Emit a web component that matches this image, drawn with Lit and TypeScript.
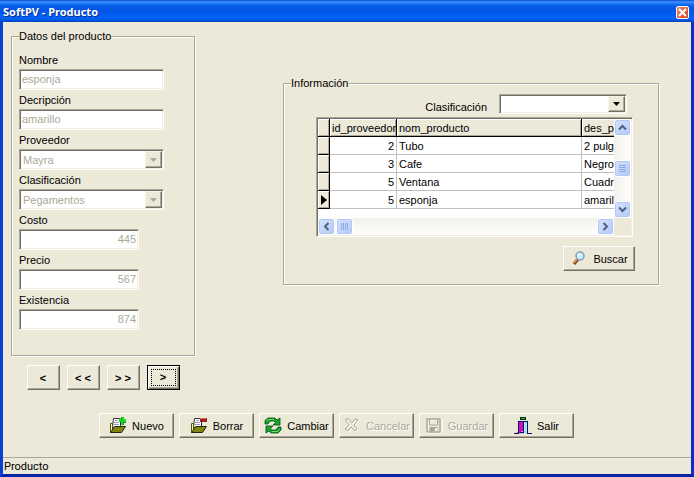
import { LitElement, html, css, svg } from "lit";
import { customElement, property } from "lit/decorators.js";

const folder = svg`
  <path d="M4.500 1.500h6l1 1v8h-8z" fill="#fff" stroke="#33333d"/>
  <path d="M6 3.500h3M5 5.500h5M5 7.500h5" stroke="#9a9ac0"/>
  <path d="M1.500 6.500h2v7l-2 2z" fill="#ffff9c" stroke="#55551a"/>
  <path d="M5.500 9.500h11l-4 6h-11z" fill="#848410" stroke="#26260a"/>`;

const icons: Record<string, unknown> = {
  nuevo: svg`
    ${folder}
    <path d="M12 0h3v2h2v3h-2v3h-3v-3h-2v-3h2z" fill="#19d51f"/>
    <path d="M12.500 0v2h-2M15 5.500h2M14.500 8v-3" stroke="#0b9a14" fill="none"/>`,
  borrar: svg`
    ${folder}
    <path d="M11.500 5v4" stroke="#222"/>
    <rect x="10" y="1" width="7" height="4" fill="#a01c1c"/>
    <rect x="10" y="1" width="6" height="1" fill="#d86a6a"/>`,
  cambiar: svg`
    <path d="M1 7V3.500L4 1h7l2 2 3-2v7H9l2.500-2.500L10 4H6L4 7z" fill="#16a52a" stroke="#064a12" stroke-width=".8"/>
    <path d="M17 10v3l-3 3H7l-2-2-3 2V9h7l-2.500 2.500L8 13h4l2-3z" fill="#16a52a" stroke="#064a12" stroke-width=".8"/>
    <path d="M2.500 4l2-1.500H10M8 14.500h5.500l2-2" stroke="#6be06c" fill="none"/>`,
  cancelar: svg`
    <path d="M4 3l3 0 3 4 3-4 3 1-4 5 3 4-2 2-4-4-3 4-3-2 4-4-3-4z" fill="none" stroke="#fff"/>
    <path d="M3 2l3 0 3 4 3-4 3 1-4 5 3 4-2 2-4-4-3 4-3-2 4-4-3-4z" fill="none" stroke="#aca899"/>`,
  guardar: svg`
    <path d="M3 3h14v13h-14z" fill="none" stroke="#fff"/>
    <path d="M2 2h13v13h-12l-1-1z" fill="none" stroke="#aca899" stroke-width="1.500"/>
    <path d="M4.500 2v6h8v-6M13 4v2" fill="none" stroke="#aca899"/>
    <path d="M4.500 10h8v4h-8z" fill="#aca899"/>
    <path d="M10 11h2v3h-2z" fill="#f6f4ea"/>`,
  salir: svg`
    <path d="M1 16.500h9l-2-2h-4z" fill="#8c8c8c"/>
    <rect x="4.500" y="4.500" width="9" height="11" fill="#fff" stroke="#10106a"/>
    <path d="M5 5h4v9l-4 2z" fill="#d010b8"/>
    <path d="M10 5h3v11h-3z" fill="#8ee6f4"/>
    <path d="M10.500 6v1M12.500 7v1M10.500 9v1M12.500 10v1M10.500 12v1M12.500 13v1" stroke="#fff"/>
    <path d="M9.500 4v11M0 16.500h5M13 16.500h5" stroke="#10106a"/>
    <rect x="6.500" y=".5" width="5" height="2" fill="#2fb85a" stroke="#0b2a12"/>`,
  buscar: svg`
    <path d="M4 14l4-5" stroke="#7a3d16" stroke-width="3"/>
    <path d="M4 13l4-5" stroke="#e8973a" stroke-width="1.500"/>
    <circle cx="10" cy="6" r="4" fill="#c9f0fb" stroke="#7d9dc0" stroke-width="1.500"/>
    <path d="M8 5.500l2-2" stroke="#fff" stroke-width="1.500"/>`,
};

const icon = (name: string) => html`<svg
  class="icon" viewBox="0 0 18 18" width="18" height="18" aria-hidden="true"
>${icons[name]}</svg>`;

const base = css`
  * { box-sizing: border-box; }
  input, select, button { font: inherit; color: inherit; margin: 0; border-radius: 0; }
  .sunken {
    padding: 1px;
    border: 1px solid;
    border-color: #aca899 #fff #fff #aca899;
    box-shadow: inset 1px 1px 0 #716f64, inset -1px -1px 0 #f1efe2;
    background: #fff;
  }
`;

@customElement("pv-field")
class PvField extends LitElement {
  @property() label = "";
  @property() value = "";
  @property() kind = "text";

  static styles = [base, css`
    :host { display: block; }
    label { display: block; height: 19px; line-height: 20px; }
    .box { display: block; width: 145px; height: 21px; padding: 0 2px 1px; color: #aca899; }
    .number { width: 120px; text-align: right; }
  `];

  render() {
    return html`
      <label for="control">${this.label}</label>
      ${this.kind === "select"
        ? html`<pv-combo id="control" .label=${this.label} .value=${this.value} disabled></pv-combo>`
        : html`<input id="control" class="box sunken ${this.kind}" .value=${this.value} disabled>`}
    `;
  }
}

@customElement("pv-combo")
class PvCombo extends LitElement {
  @property() label = "";
  @property() value = "";
  @property({ type: Boolean }) disabled = false;

  static styles = [base, css`
    :host { display: block; width: 145px; }
    .combo { display: grid; grid-template-columns: 1fr 17px; height: 20px; }
    :host([disabled]) .combo { color: #aca899; height: 21px; }
    select {
      grid-area: 1 / 1 / 2 / 3;
      appearance: none;
      width: 100%;
      border: 0;
      padding: 0 20px 0 2px;
      background: transparent;
      opacity: 1;
      outline: 0;
    }
    .arrow {
      grid-area: 1 / 2;
      display: grid;
      place-items: center;
      pointer-events: none;
      background: #ece9d8;
      border: 1px solid;
      border-color: #f6f4ea #716f64 #716f64 #f6f4ea;
      box-shadow: inset -1px -1px 0 #aca899;
    }
  `];

  render() {
    return html`
      <div class="combo sunken">
        <select aria-label=${this.label} ?disabled=${this.disabled}>
          <option>${this.value}</option>
        </select>
        <span class="arrow">
          <svg width="7" height="4" viewBox="0 0 7 4"><path d="M0 0h7L3.500 4z" fill="currentColor"/></svg>
        </span>
      </div>`;
  }
}

@customElement("app-root")
class AppRoot extends LitElement {
  fields = [
    ["Nombre", "esponja", "text"],
    ["Decripción", "amarillo", "text"],
    ["Proveedor", "Mayra", "select"],
    ["Clasificación", "Pegamentos", "select"],
    ["Costo", "445", "number"],
    ["Precio", "567", "number"],
    ["Existencia", "874", "number"],
  ];

  rows = [
    ["2", "Tubo", "2 pulgadas"],
    ["3", "Cafe", "Negro"],
    ["5", "Ventana", "Cuadrada"],
    ["5", "esponja", "amarillo"],
  ];

  actions = [
    ["nuevo", "Nuevo"],
    ["borrar", "Borrar"],
    ["cambiar", "Cambiar"],
    ["cancelar", "Cancelar"],
    ["guardar", "Guardar"],
    ["salir", "Salir"],
  ];

  static styles = [base, css`
    :host {
      display: flex;
      flex-direction: column;
      min-height: 100vh;
      box-sizing: border-box;
      background: #ece9d8;
      color: #000;
      font: 11px/14px "Liberation Sans", Arial, sans-serif;
    }
    .title {
      display: flex;
      align-items: center;
      justify-content: space-between;
      height: 22px;
      padding: 2px 5px 0 3px;
      background: linear-gradient(#0b4fd0 0, #3c93ff 2px, #0a62ee 5px, #0055e2 10px, #0262fb 18px, #0458e8 20px, #0340b8 22px);
      color: #fff;
    }
    h1 { margin: 0; font: bold 11px/16px "Noto Sans", sans-serif; text-shadow: 1px 1px 0 #0a2f8c; }
    .close {
      display: grid;
      place-items: center;
      width: 13px;
      height: 13px;
      padding: 0;
      border: 1px solid #fff;
      border-radius: 2px;
      background: linear-gradient(135deg, #e8896c, #d2431c);
    }
    .frame {
      flex: 1;
      display: flex;
      flex-direction: column;
      border: 3px solid #0a3fd4;
      border-top: 0;
      border-bottom-color: #0525a5;
      border-right-color: #0831c0;
    }
    main { flex: 1; padding: 7px 32px 19px 8px; }
    .panels { display: flex; align-items: flex-start; gap: 88px; }
    fieldset {
      min-width: 0;
      margin: 0;
      border: 1px solid #aca899;
      box-shadow: 1px 1px 0 #fff, inset 1px 1px 0 #fff;
    }
    legend { padding: 0 1px 0 0; background: #ece9d8; }
    .data { width: 184px; padding: 7px 7px 25px; }
    .nav { display: flex; justify-content: center; gap: 7px; margin-top: 9px; }
    .info { flex: 1; min-width: 0; margin-top: 47px; padding: 4px 25px 13px 32px; }
    .info legend { margin-left: -25px; }
    .filter { display: flex; justify-content: flex-end; align-items: flex-end; gap: 12px; padding-right: 6px; margin-bottom: 3px; }
    .filter pv-combo { width: 128px; }

    .btn {
      display: flex;
      align-items: center;
      justify-content: center;
      gap: 5px;
      width: 75px;
      height: 25px;
      padding: 0;
      border: 1px solid;
      border-color: #fff #716f64 #716f64 #fff;
      box-shadow: inset -1px -1px 0 #aca899;
      background: #ece9d8;
    }
    .btn:disabled { color: #aca899; text-shadow: 1px 1px 0 #fff; }
    .step { width: 33px; font-weight: bold; }
    .current {
      border-color: #000;
      box-shadow: inset 1px 1px 0 #fff, inset -1px -1px 0 #716f64, inset -2px -2px 0 #aca899;
    }
    .current span { border: 1px dotted #000; width: 25px; height: 17px; line-height: 15px; }
    .search { width: 72px; margin: 9px -2px 0 auto; }
    .toolbar { display: flex; flex-wrap: wrap; gap: 5px; margin-top: 23px; padding-left: 88px; }
    .icon { flex: none; }

    .grid { display: grid; grid-template-columns: minmax(0, 1fr) 17px; grid-template-rows: 99px 17px; }
    .view { overflow: hidden; }
    table { table-layout: fixed; width: 384px; border-collapse: separate; border-spacing: 0; }
    th, td { height: 18px; padding: 0 2px; font-weight: normal; text-align: left; white-space: nowrap; overflow: hidden; border: 0 solid #c0c0c0; border-width: 0 1px 1px 0; }
    th { background: #ece9d8; border-color: #000; box-shadow: inset 1px 1px 0 #fff, inset -1px -1px 0 #aca899; }
    .mark { width: 12px; padding: 0 0 0 3px; }
    .mark svg { display: block; }
    .id { width: 67px; }
    .name { width: 185px; }
    td.id { text-align: right; }
    .bar { display: flex; background: #f6f5f0; }
    .vertical { flex-direction: column; justify-content: space-between; background: linear-gradient(90deg, #f3f1ec, #fefefb); }
    .horizontal { gap: 1px; background: linear-gradient(#f3f1ec, #fefefb); }
    .bar button {
      display: grid;
      place-items: center;
      width: 17px;
      height: 17px;
      padding: 0;
      border: 1px solid #fff;
      border-radius: 3px;
      background: linear-gradient(135deg, #d6e3fe, #b4c9f7);
      box-shadow: inset 0 0 0 1px #b2c6f4;
    }
    .bar .last { margin-left: auto; }
    .corner { background: #ece9d8; }
    .status { border-top: 1px solid #aca899; padding: 1px 1px 0; height: 17px; font: 11px/16px Roboto, sans-serif; }
  `];

  chevron(label: string, d: string, cls = "") {
    return html`<button class=${cls} aria-label=${label}>
      <svg width="9" height="9" viewBox="0 0 9 9"><path d=${d} fill="none" stroke="#4d6185" stroke-width="2"/></svg>
    </button>`;
  }

  render() {
    return html`
      <header class="title">
        <h1>SoftPV - Producto</h1>
        <button class="close" aria-label="Cerrar">
          <svg width="9" height="9" viewBox="0 0 9 9"><path d="M1 1l7 7M8 1l-7 7" stroke="#fff" stroke-width="2"/></svg>
        </button>
      </header>
      <div class="frame">
        <main>
          <div class="panels">
            <div>
              <fieldset class="data">
                <legend>Datos del producto</legend>
                ${this.fields.map(([label, value, kind]) => html`
                  <pv-field .label=${label} .value=${value} .kind=${kind}></pv-field>`)}
              </fieldset>
              <nav class="nav">
                <button class="btn step">&lt;</button>
                <button class="btn step">&lt; &lt;</button>
                <button class="btn step">&gt; &gt;</button>
                <button class="btn step current"><span>&gt;</span></button>
              </nav>
            </div>
            <fieldset class="info">
              <legend>Información</legend>
              <div class="filter">
                <span>Clasificación</span>
                <pv-combo label="Clasificación"></pv-combo>
              </div>
              <div class="grid sunken">
                <div class="view">
                  <table>
                    <thead>
                      <tr>
                        <th class="mark"></th>
                        <th class="id">id_proveedor</th>
                        <th class="name">nom_producto</th>
                        <th>des_producto</th>
                      </tr>
                    </thead>
                    <tbody>
                      ${this.rows.map(([id, name, description], i) => html`
                        <tr>
                          <th class="mark">${i === 3
                            ? html`<svg width="6" height="10" viewBox="0 0 6 10"><path d="M0 0l6 5-6 5z"/></svg>`
                            : ""}</th>
                          <td class="id">${id}</td>
                          <td class="name">${name}</td>
                          <td>${description}</td>
                        </tr>`)}
                    </tbody>
                  </table>
                </div>
                <div class="bar vertical">
                  ${this.chevron("Subir", "M1 6.500L4.500 3 8 6.500")}
                  <button aria-label="Desplazar filas">
                    <svg width="7" height="8" viewBox="0 0 7 8"><path d="M0 .5h7M0 2.500h7M0 4.500h7M0 6.500h7" stroke="#8aa6e6"/></svg>
                  </button>
                  ${this.chevron("Bajar", "M1 2.500L4.500 6 8 2.500")}
                </div>
                <div class="bar horizontal">
                  ${this.chevron("Izquierda", "M6.500 1L3 4.500 6.500 8")}
                  <button aria-label="Desplazar columnas">
                    <svg width="8" height="7" viewBox="0 0 8 7"><path d="M.5 0v7M2.500 0v7M4.500 0v7M6.500 0v7" stroke="#8aa6e6"/></svg>
                  </button>
                  ${this.chevron("Derecha", "M2.500 1L6 4.500 2.500 8", "last")}
                </div>
                <div class="corner"></div>
              </div>
              <button class="btn search">${icon("buscar")}Buscar</button>
            </fieldset>
          </div>
          <div class="toolbar">
            ${this.actions.map(([name, label]) => html`
              <button class="btn" ?disabled=${name === "cancelar" || name === "guardar"}>${icon(name)}${label}</button>`)}
          </div>
        </main>
        <footer class="status">Producto</footer>
      </div>
    `;
  }
}
